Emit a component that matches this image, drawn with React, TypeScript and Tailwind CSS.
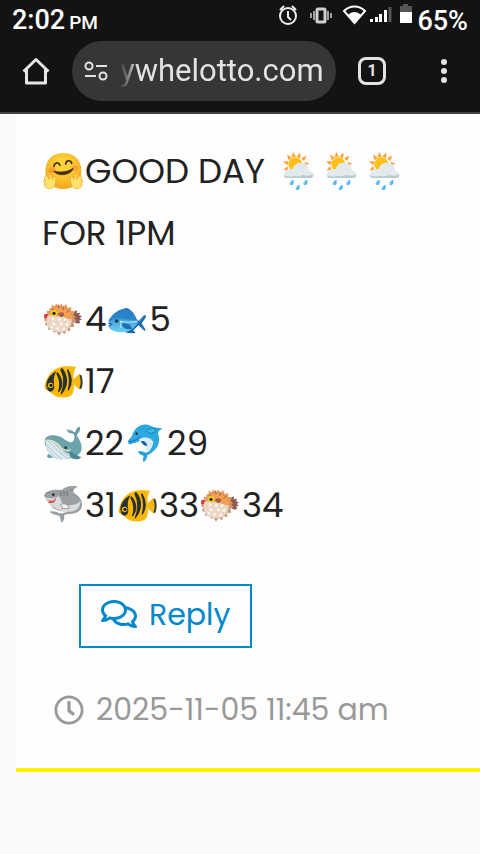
import type { ReactNode } from 'react';
import { FaRegClock, FaRegComments } from 'react-icons/fa';

function Emoji({ label, children }: { label: string; children: ReactNode }) {
  return (
    <svg role="img" aria-label={label} viewBox="0 0 129 129" className="size-[43px] shrink-0">
      {children}
    </svg>
  );
}

function HuggingFace() {
  return (
    <Emoji label="Hugging face">
      <defs>
        <radialGradient id="face" cx="50%" cy="35%" r="65%">
          <stop offset="0.3" stopColor="#fdd13a" />
          <stop offset="1" stopColor="#f4a51c" />
        </radialGradient>
      </defs>
      <path d="M64 9C34 9 10 28 10 63c0 34 22 54 54 54s54-20 54-54C118 28 94 9 64 9Z" fill="url(#face)" />
      <ellipse cx="30" cy="61" rx="11" ry="9" fill="#f58a35" opacity=".6" />
      <ellipse cx="98" cy="55" rx="11" ry="9" fill="#f58a35" opacity=".5" />
      <path d="M36 49c1-12 14-14 18-3M71 42c2-12 15-13 18-2" fill="none" stroke="#422b0d" strokeWidth="5" strokeLinecap="round" />
      <path d="M35 63c20 6 43 3 59-8-8 22-47 26-59 8Z" fill="#422b0d" stroke="#422b0d" strokeWidth="2" strokeLinejoin="round" />
      <path d="M13 77c4 1 7 8 10 13l-2-13c-1-6 5-7 7-1l4 13c2-5 2-10 7-10 5 1 2 8 2 14 0 16-8 23-19 23-7 0-14-4-15-10-2-3 1-4 3-3-5-5-7-10-4-12l4 2c-3-6-5-12 3-16Z" fill="#ffe36d" stroke="#eda52b" strokeWidth="2" />
      <path d="M114 77c-4 1-7 8-10 13l2-13c1-6-5-7-7-1l-4 13c-2-5-2-10-7-10-5 1-2 8-2 14 0 16 8 23 19 23 7 0 14-4 15-10 2-3-1-4-3-3 5-5 7-10 4-12l-4 2c3-6 5-12-3-16Z" fill="#ffe36d" stroke="#eda52b" strokeWidth="2" />
    </Emoji>
  );
}

function SunShower() {
  return (
    <Emoji label="Sun behind rain cloud">
      <path d="m49 7 7 13-12 1Zm21 2-1 16-10-6ZM31 14l13 9-9 7Zm57 4-7 14-8-7ZM19 35l15-1-3 11Zm77 6-10 4-3-9ZM21 61l9-12 4 10Z" fill="#ff9f32" stroke="#ff9f32" strokeWidth="1" strokeLinejoin="round" />
      <circle cx="55" cy="43" r="21" fill="#ffbf16" />
      <path d="M21 75c0-10 7-18 19-18h7c4-14 14-20 27-19 13 1 21 10 21 23 9 3 14 8 14 15 0 6-4 8-10 8H30c-6 0-9-3-9-9Z" fill="#e2eaed" />
      <path d="M21 75c0 6 3 9 9 9h69c8 0 11-4 10-11-9 5-20 5-32 2-8 5-16 5-26 2-9 4-21 4-30-2Z" fill="#b7cbd0" />
      <path d="M49 89c3 8 1 16-6 16-8-1-6-10 6-16Zm18 15c3 8 1 16-6 16-8-1-6-10 6-16Zm23-15c3 8 1 16-6 16-8-1-6-10 6-16Z" fill="#50b4ef" />
      <path d="M42 97v4m18 11v4m23-19v4" stroke="#96dcff" strokeWidth="2" strokeLinecap="round" />
    </Emoji>
  );
}

function Pufferfish() {
  return (
    <Emoji label="Blowfish">
      <path d="M91 52c5-8 7-16 14-14l-1 8 10-2-3 8 9 3-7 5 7 5-8 2 2 8c-9 4-17-1-23-9Z" fill="#8b5b52" />
      <path d="m21 32 10-2-3-10 11 5 3-9 8 9 8-8 6 10 9-8 4 12 11-4-1 12 11 1-3 11 8 8H13l-6-9 10-2-3-10 10 1Z" fill="#e99652" />
      <path d="M10 52c-4 7-1 11-4 15l6 3-3 12 9 1 1 13 11-3 6 11 8-3 7 12 8-12 10 8 4-13 12 4-1-13 13-1-3-12 10-5-7-8c-8-15-22-27-42-28C27 33 15 43 10 52Z" fill="#c9967c" />
      <ellipse cx="51" cy="69" rx="38" ry="34" fill="#ecd6c4" />
      <path d="M14 52c17-31 68-31 79 10-15 5-27-4-36-10-18 8-27-3-43 0Z" fill="#f2a054" />
      <path d="M27 45c0-8 9-12 15-7 6 6 4 15-5 16-6 1-10-3-10-9Z" fill="#f0dc19" />
      <circle cx="36" cy="46" r="5" fill="#24271b" />
      <path d="M47 48c7-5 15-7 18-2 4 5-2 12-7 11-6 0-5-5-11-9Z" fill="#a26043" />
      <path d="M7 49c6-2 12 0 12 5-6-1-7 1-3 4-4 4-10 3-10-1Z" fill="#db3542" />
      <path d="m29 58 9 3-6 8Zm19 2 9 2-6 9Zm18-1 9 5-9 6ZM30 78l8-7 2 12Zm22 0 8-6 2 11Zm17 2 9-7v12ZM40 91l10-5-1 11Zm-16-5 7-3 2 11Zm36 9 8-7 1 10Z" fill="#fff" />
      <path d="m49 21 2 9m13-4-1 9m17 2-6 6M30 30l5 6" stroke="#a96035" strokeWidth="3" strokeLinecap="round" />
    </Emoji>
  );
}

function BlueFish() {
  return (
    <Emoji label="Fish">
      <defs>
        <linearGradient id="scales" x1="0" y1="0" x2="0" y2="1">
          <stop stopColor="#1976b8" />
          <stop offset="1" stopColor="#72d2f4" />
        </linearGradient>
      </defs>
      <path d="M36 48C45 36 54 30 61 30c12 3 25 16 30 34l7 5 16-17c6-2 8 2 4 8l-11 16 10 16c3 6 1 8-4 5L97 82l-16 16 7 4-2 4-20-1-30-9Z" fill="#1768ac" />
      <path d="M7 69C16 54 32 36 54 34c21 2 36 20 43 39-11 17-27 31-50 30-19 0-32-6-40-17l6-6-8-5 6-2Z" fill="url(#scales)" />
      <path d="M7 69C16 54 32 34 56 32c18 4 31 16 37 35l-28-3-29-4c-10-2-21 9-29 9Z" fill="#2a83c6" />
      <path d="M44 70c20 4 34 3 48 1M44 70c2 8 1 13-1 19" fill="none" stroke="#c8f1ff" strokeWidth="3" strokeLinecap="round" />
      <path d="M47 78c14-4 29 2 31 14-14 5-27 0-31-14Z" fill="#1871b5" />
      <path d="m100 72 14-16M100 78l13 14" stroke="#4fa7dd" strokeWidth="2" />
      <circle cx="32" cy="69" r="5" fill="#1d3040" />
      <path d="m8 75 8 3-7 6" fill="none" stroke="#1768ac" strokeWidth="4" />
    </Emoji>
  );
}

function TropicalFish() {
  return (
    <Emoji label="Tropical fish">
      <path d="M94 60c6-6 13-16 19-18 6 4 8 15 7 25-1 9-1 18-6 22-6-4-13-10-19-17Z" fill="#f8b714" />
      <path d="M115 45c5 13 5 28 0 41" fill="none" stroke="#343d35" strokeWidth="6" />
      <path d="M8 78c7-39 34-63 74-59l20 1c-6 11-9 23-7 35 3 13 3 37-6 50-10 8-24 8-34 7-15-2-24-8-34-20-9-1-14-5-13-14Z" fill="#ffb800" />
      <path d="M95 66c2 14-1 31-7 39" fill="none" stroke="#c8db50" strokeWidth="3" />
      <path d="M43 34c-23 12-33 31-29 50 6 16 21 14 23-2-1-19-5-27 6-48Z" fill="#28322f" />
      <path d="M60 26c19 23 17 53-2 75 10-25 11-48-1-72ZM46 39c16 18 17 40 4 56 6-19 6-35-5-53ZM78 30c12 20 12 42 1 60 5-20 6-39-2-58Z" fill="#28322f" stroke="#28322f" strokeWidth="4" strokeLinejoin="round" />
      <circle cx="26" cy="76" r="8" fill="#ffc91e" />
      <circle cx="27" cy="76" r="5" fill="#17231f" />
      <path d="m9 79 8 2-7 4" fill="none" stroke="#e08d00" strokeWidth="2" />
    </Emoji>
  );
}

function Whale() {
  return (
    <Emoji label="Whale">
      <defs>
        <clipPath id="belly">
          <path d="M10 56c24-1 42 13 53 28 10 12 23 15 34 10-12 25-70 30-83-13Z" />
        </clipPath>
      </defs>
      <path d="M15 101c8-9 18-9 28-8l-7 13c-8 3-22 4-21-5Z" fill="#659aa6" />
      <path d="M8 54c3-16 34-19 54-6 14 10 24 17 31 10 6-6 5-18 1-23-11 0-18-4-19-10 8 3 14 0 20 5 3 2 5 1 7-6 2-7 7-10 11-10 3 8 0 17-8 23 0 11 14 19 14 40 0 25-31 35-57 33C30 107 8 82 8 54Z" fill="#6ba3ad" />
      <path d="M73 24c8 1 18 0 22 7m3 6c3-9 12-10 14-20" fill="none" stroke="#467e89" strokeWidth="2" />
      <g clipPath="url(#belly)">
        <path d="M5 50h98v67H5Z" fill="#dceaf0" />
        <path d="m8 64 54 52M8 75l42 42M17 57l64 58M31 59l57 53M43 66l52 44" stroke="#96b5c1" strokeWidth="2" />
      </g>
      <path d="M9 55c25-4 43 13 48 22 9 10 18 12 29 5" fill="none" stroke="#eee4b8" strokeWidth="4" />
      <circle cx="71" cy="77" r="4" fill="#203c43" />
      <path d="M84 89c8 0 17 11 34 16-6 9-24 9-31 1-4-4-5-10-3-17Z" fill="#488694" />
    </Emoji>
  );
}

function Dolphin() {
  return (
    <Emoji label="Dolphin">
      <path d="M12 58c0-5 8-10 12-17C31 16 51 4 71 8c10 2 17 8 25 9 8 0 17 0 19 4-8 2-12 7-13 14 7 16 3 37-11 50-9 9-15 12-21 15 0 9-5 18-12 21-2-8 2-12 1-19-5-4-14-4-17-13 8-3 17 0 23 3 13-2 21-16 21-31-6-6-14-12-22-14-11 4-20 14-37 17-9 6-15 4-15-6Z" fill="#2da9df" />
      <path d="M45 52c14-9 34-7 43 7-1 14-10 25-20 30-2-9-4-18-12-25-4-4-8-7-11-12Z" fill="#d9edf5" />
      <path d="M14 58c13 2 27-7 35-13" fill="none" stroke="#1376ab" strokeWidth="3" />
      <path d="M51 58c10-3 17 4 19 14-8-1-16-4-19-14Z" fill="#0d5f9c" />
      <path d="M65 31c16-19 23-13 31-10-3 13-14 15-25 11" fill="#39b9e7" stroke="#1478a7" strokeWidth="3" />
      <circle cx="38" cy="35" r="4" fill="#263947" />
      <path d="m47 90 14 7 11-5M62 98l-4 16" fill="none" stroke="#1688bc" strokeWidth="2" />
    </Emoji>
  );
}

function Shark() {
  return (
    <Emoji label="Shark">
      <path d="M6 35C9 22 30 14 55 18c11-1 11-10 34-12 12-1 17 1 19 3-10 2-15 8-13 17 18 10 27 24 25 41-3 17-22 23-43 23l-10 3c0 9-1 19-7 23-6-5-3-14-8-20-9-5-21-4-29-13 10-3 21 0 29 5 15 1 21-5 25-8-22 5-44-3-50-17l-8-7Z" fill="#9c9fa1" />
      <path d="M10 40c18 6 28 2 41-3 6 9 9 21 14 24 14 6 40 2 51-10-2 22-14 34-39 32-27-1-50-13-67-43Z" fill="#d8dadb" />
      <path d="M55 62c12-7 23 0 27 10-12 4-16 0-23 2 4-5 1-8-4-12Z" fill="#f1f1f1" stroke="#969a9d" strokeWidth="3" />
      <path d="M18 48c8 2 20-1 25-7-2 13-10 18-22 15Z" fill="#d9414a" />
      <path d="m19 49 5 3 3-3 5 2 3-4 5 1" fill="none" stroke="#fff" strokeWidth="2" />
      <path d="M56 22c3 5 1 9 1 14m8-15c3 5 1 9 1 14m8-14c3 5 1 9 1 15" fill="none" stroke="#697076" strokeWidth="3" />
      <path d="M12 29c5-5 10-4 13-2M91 15l-11 8" fill="none" stroke="#74797c" strokeWidth="2" />
      <circle cx="34" cy="32" r="4" fill="#252b2e" />
    </Emoji>
  );
}

function StatusBar() {
  return (
    <div className="flex h-[41px] items-center px-3 font-medium text-white">
      <div className="flex items-baseline gap-1">
        <span className="text-[27px] leading-8">2:02</span>
        <span className="text-[19px]">PM</span>
      </div>
      <div className="ml-auto flex items-center gap-1">
        <svg viewBox="0 0 140 28" className="mb-3.5 h-7 w-[140px]" fill="none" stroke="#ededed" strokeWidth="2">
          <circle cx="15" cy="16" r="8" />
          <path d="M15 11v6l3 3M7 10l4-4M19 6l4 4" />
          <rect x="44" y="9" width="8" height="13" rx="1" stroke="#cfcfcf" strokeWidth="3" />
          <path d="M41 11v9m-3-7v5m17-7v9m3-7v5" stroke="#9e9e9e" />
          <path d="M71 11c6-6 15-6 21 0L81.500 23Z" stroke="#fff" />
          <path d="M75 15c4-4 9-4 13 0l-6 8Z" fill="#fff" stroke="none" />
          <path d="M98.500 19v3m5-5v5m4-8v8m5-12v12" stroke="#fff" strokeWidth="3" />
          <path d="M117 7v15" stroke="#555" strokeWidth="3" />
          <path d="M130 4h5v2h4v8h-12V6h3Z" fill="#555" stroke="none" />
          <path d="M127 12h12v11h-12Z" fill="#fff" stroke="none" />
        </svg>
        <span className="text-[27px] leading-8">65%</span>
      </div>
    </div>
  );
}

function BrowserBar() {
  return (
    <div className="flex items-center pb-[11px]">
      <button aria-label="Home" className="flex w-[72px] shrink-0 justify-center">
        <svg viewBox="0 0 28 28" className="size-7" fill="none" stroke="#e5e5e5" strokeWidth="3" strokeLinejoin="round">
          <path d="M1.500 14.500 14 2.500l12.500 12M4.500 12v14h19V12" />
        </svg>
      </button>
      <div className="flex h-[60px] min-w-0 flex-1 items-center gap-3 rounded-full bg-[#353638] px-3">
        <button aria-label="Site information" className="shrink-0">
          <svg viewBox="0 0 24 20" className="h-5 w-6" fill="none" stroke="#e3e3e3" strokeWidth="2">
            <circle cx="5" cy="5" r="3.500" />
            <path d="M12 5h11M1 15h11" />
            <circle cx="19" cy="15" r="3.500" />
          </svg>
        </button>
        <input
          aria-label="Address"
          defaultValue="ywhelotto.com"
          className="h-10 w-full min-w-0 bg-transparent text-[31px] text-[#e3e3e3] outline-none [mask-image:linear-gradient(to_right,transparent,black_18px)]"
        />
      </div>
      <button aria-label="Open tabs" className="flex w-[72px] shrink-0 justify-center">
        <span className="flex size-7 items-center justify-center rounded-lg border-3 border-[#e3e3e3] text-base font-bold text-[#e3e3e3]">1</span>
      </button>
      <button aria-label="Menu" className="flex w-[72px] shrink-0 justify-center">
        <svg viewBox="0 0 8 26" className="h-[26px] w-2" fill="#e3e3e3">
          <circle cx="4" cy="4" r="3" />
          <circle cx="4" cy="13" r="3" />
          <circle cx="4" cy="22" r="3" />
        </svg>
      </button>
    </div>
  );
}

function Comment() {
  return (
    <article className="ml-4 border-b-4 border-[#ffee00] bg-[#fefefe] pl-[26px] pt-[26px] pb-9 font-['Poppins','Inter',sans-serif] text-[#222]">
      <div className="text-[34px] leading-[62px]">
        <div className="flex items-center">
          <HuggingFace />
          <span className="mr-3 whitespace-nowrap">GOOD DAY</span>
          <SunShower />
          <SunShower />
          <SunShower />
        </div>
        <p>FOR 1PM</p>
        <div className="mt-6 flex items-center"><Pufferfish />4<BlueFish />5</div>
        <div className="flex items-center"><TropicalFish />17</div>
        <div className="flex items-center"><Whale />22<Dolphin />29</div>
        <div className="flex items-center"><Shark />31<TropicalFish />33<Pufferfish />34</div>
      </div>
      <button className="ml-[37px] mt-12 flex h-16 items-center gap-3 border-2 border-[#0088cc] px-5 pb-1 text-[30px] text-[#0088cc]">
        <FaRegComments className="size-9" />
        Reply
      </button>
      <div className="ml-3 mt-10 flex items-center gap-3 text-[30px] leading-[44px] text-[#999]">
        <FaRegClock className="size-[30px]" />
        <time dateTime="2025-11-05T11:45" className="whitespace-nowrap">2025-11-05 11:45 am</time>
      </div>
    </article>
  );
}

export default function App() {
  return (
    <div className="min-h-screen bg-[#fafafa]">
      <header className="border-b-2 border-[#454345] bg-[#131313] font-[Roboto,sans-serif]">
        <StatusBar />
        <BrowserBar />
      </header>
      <main>
        <Comment />
      </main>
    </div>
  );
}
